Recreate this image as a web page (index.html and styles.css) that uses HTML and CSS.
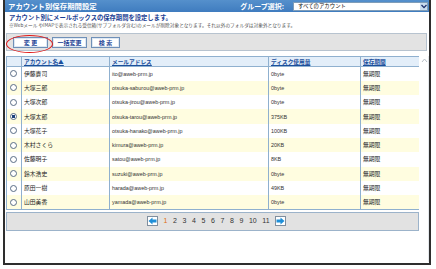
FILE: index.html
```html
<!DOCTYPE html>
<html lang="ja">
<head>
<meta charset="utf-8">
<link rel="stylesheet" href="styles.css">
</head>
<body>
<div class="window">
  <div class="titlebar">
    <span class="title">アカウント別保存期間設定</span>
    <div class="group">
      <span class="glabel">グループ選択:</span>
      <div class="select">
        <span class="seltext">すべてのアカウント</span>
        <span class="selarrow"><svg width="6" height="5" viewBox="0 0 6 5"><path d="M0.5 1 L3 3.6 L5.5 1" fill="none" stroke="#1b2f6b" stroke-width="1.3"/></svg></span>
      </div>
    </div>
  </div>
  <div class="content">
    <p class="desc">アカウント別にメールボックスの保存期間を設定します。</p>
    <p class="note">※Webメール やIMAPで表示される受信箱(サブフォルダ含む)のメールが削除対象となります。それ以外のフォルダは対象外となります。</p>
    <div class="toolbar">
      <button class="btn b1">変 更</button>
      <button class="btn b2">一括変更</button>
      <button class="btn b3">検 索</button>
      <span class="mark"></span>
    </div>
    <div class="listwrap">
      <div class="list">
        <table class="grid">
          <colgroup><col class="c0"><col class="c1"><col class="c2"><col class="c3"><col class="c4"></colgroup>
          <thead>
            <tr><th></th><th><a>アカウント名▲</a></th><th><a>メールアドレス</a></th><th><a>ディスク使用量</a></th><th><a>保存期間</a></th></tr>
          </thead>
          <tbody>
            <tr><td><span class="radio"></span></td><td>伊藤貴司</td><td class="mail">ito@aweb-prm.jp</td><td class="mail">0byte</td><td>無期限</td></tr>
            <tr class="alt"><td><span class="radio"></span></td><td>大塚三郎</td><td class="mail">otsuka-saburou@aweb-prm.jp</td><td class="mail">0byte</td><td>無期限</td></tr>
            <tr><td><span class="radio"></span></td><td>大塚次郎</td><td class="mail">otsuka-jirou@aweb-prm.jp</td><td class="mail">0byte</td><td>無期限</td></tr>
            <tr class="alt"><td><span class="radio on"></span></td><td>大塚太郎</td><td class="mail">otsuka-tarou@aweb-prm.jp</td><td class="mail">375KB</td><td>無期限</td></tr>
            <tr><td><span class="radio"></span></td><td>大塚花子</td><td class="mail">otsuka-hanako@aweb-prm.jp</td><td class="mail">100KB</td><td>無期限</td></tr>
            <tr class="alt"><td><span class="radio"></span></td><td>木村さくら</td><td class="mail">kimura@aweb-prm.jp</td><td class="mail">20KB</td><td>無期限</td></tr>
            <tr><td><span class="radio"></span></td><td>佐藤明子</td><td class="mail">satou@aweb-prm.jp</td><td class="mail">8KB</td><td>無期限</td></tr>
            <tr class="alt"><td><span class="radio"></span></td><td>鈴木浩史</td><td class="mail">suzuki@aweb-prm.jp</td><td class="mail">0byte</td><td>無期限</td></tr>
            <tr><td><span class="radio"></span></td><td>原田一樹</td><td class="mail">harada@aweb-prm.jp</td><td class="mail">49KB</td><td>無期限</td></tr>
            <tr class="alt"><td><span class="radio"></span></td><td>山田美香</td><td class="mail">yamada@aweb-prm.jp</td><td class="mail">0byte</td><td>無期限</td></tr>
          </tbody>
        </table>
        <div class="pager">
          <span class="pbtn"><svg width="9" height="8" viewBox="0 0 9 8"><path d="M0.5 4 L4.5 0.5 L4.5 2.5 L8.5 2.5 L8.5 5.5 L4.5 5.5 L4.5 7.5 Z" fill="#1f8fd8"/></svg></span>
          <span class="pg cur">1</span><span class="pg">2</span><span class="pg">3</span><span class="pg">4</span><span class="pg">5</span><span class="pg">6</span><span class="pg">7</span><span class="pg">8</span><span class="pg">9</span><span class="pg">10</span><span class="pg">11</span>
          <span class="pbtn"><svg width="9" height="8" viewBox="0 0 9 8"><path d="M8.5 4 L4.5 0.5 L4.5 2.5 L0.5 2.5 L0.5 5.5 L4.5 5.5 L4.5 7.5 Z" fill="#1f8fd8"/></svg></span>
        </div>
      </div>
      <div class="scroll">
        <svg width="7" height="5" viewBox="0 0 7 5"><path d="M1 4 L3.5 1 L6 4" fill="none" stroke="#b8c0c8" stroke-width="1"/></svg>
      </div>
    </div>
  </div>
</div>
</body>
</html>
```

FILE: styles.css
```css
* { box-sizing: border-box; }
body {
  margin: 0;
  background: #fff;
  font-family: "Liberation Sans", "Noto Sans CJK JP", sans-serif;
}
.window {
  margin-left: 3px;
  width: 428px;
  height: 265px;
  border: 2px solid #2e2e2e;
  border-top: 0;
  background: #fff;
}
.titlebar {
  height: 13px;
  background: linear-gradient(#5590cc, #3f7cbf);
  border-bottom: 1px solid #fff;
  display: flex;
  align-items: center;
  padding-left: 3px;
}
.title {
  color: #fff;
  font-family: "Noto Sans CJK JP", sans-serif;
  font-size: 7.4px;
  font-weight: bold;
  line-height: 12px;
}
.group {
  margin-left: auto;
  display: flex;
  align-items: center;
}
.glabel {
  color: #fff;
  font-family: "Noto Sans CJK JP", sans-serif;
  font-size: 7px;
  font-weight: bold;
  margin-right: 9px;
  line-height: 12px;
}
.select {
  width: 135px;
  height: 9px;
  margin-right: 1px;
  background: #fff;
  border: 1px solid #7f9db9;
  display: flex;
  align-items: center;
}
.seltext {
  font-family: "Noto Sans CJK JP", sans-serif;
  font-size: 5.4px;
  color: #111;
  padding-left: 4px;
  line-height: 7px;
}
.selarrow {
  margin-left: auto;
  width: 7px;
  height: 7px;
  background: #c9dcef;
  display: flex;
  align-items: center;
  justify-content: center;
}
.content {
  padding: 0 1px;
}
.desc {
  margin: 1px 0 0 0;
  padding-left: 3px;
  font-family: "Noto Sans CJK JP", sans-serif;
  font-size: 6.3px;
  font-weight: bold;
  color: #1c3f94;
  line-height: 8px;
}
.note {
  margin: 0;
  padding-left: 3px;
  font-family: "Noto Sans CJK JP", sans-serif;
  font-size: 4.7px;
  color: #555;
  line-height: 6px;
  white-space: nowrap;
}
.toolbar {
  position: relative;
  margin-top: 5px;
  width: 421px;
  height: 18px;
  background: #e3e3e3;
  border: 1px solid #b7c3cf;
  display: flex;
  align-items: center;
  padding-left: 6px;
  gap: 4px;
}
.btn {
  height: 11px;
  padding: 0;
  background: #fff;
  border: 1px solid #6f90b8;
  box-shadow: inset 0 0 0 1px #dfe8f2;
  color: #1c3f94;
  font-family: "Noto Sans CJK JP", sans-serif;
  font-size: 6px;
  font-weight: bold;
  line-height: 9px;
}
.b1 { width: 35px; }
.b2 { width: 35px; }
.b3 { width: 29px; }
.mark {
  position: absolute;
  left: -1px;
  top: 1px;
  width: 47px;
  height: 18px;
  border: 1.6px solid #e01818;
  border-radius: 50%;
}
.listwrap {
  margin-top: 5px;
  display: flex;
}
.list {
  width: 413px;
}
.grid {
  width: 413px;
  border-collapse: collapse;
  table-layout: fixed;
  border: 1px solid #8fb0cf;
}
.c0 { width: 15px; }
.c1 { width: 88px; }
.c2 { width: 159px; }
.c3 { width: 92px; }
.c4 { width: 59px; }
.grid th {
  height: 10px;
  padding: 0 0 0 2px;
  background: #e3eef9;
  border: 1px solid #8fb0cf;
  text-align: left;
  font-family: "Noto Sans CJK JP", sans-serif;
  font-size: 5.7px;
  font-weight: bold;
  line-height: 8px;
}
.grid th a {
  color: #1b4f9c;
  text-decoration: underline;
}
.grid td {
  height: 14.3px;
  padding: 0 0 0 2px;
  border-left: 1px solid #8fb0cf;
  border-right: 1px solid #8fb0cf;
  font-family: "Noto Sans CJK JP", sans-serif;
  font-size: 5.8px;
  color: #222;
  line-height: 8px;
  white-space: nowrap;
}
.grid td.mail {
  font-family: "Liberation Sans", sans-serif;
  font-size: 5.4px;
  color: #333;
}
.grid tr.alt td { background: #fffde0; }
.grid td:first-child { padding: 0 0 0 3px; }
.radio {
  display: block;
  width: 7px;
  height: 7px;
  border: 1px solid #5a6d86;
  border-radius: 50%;
  background: #fff;
}
.radio.on {
  background: radial-gradient(circle, #1b3f7a 0 1.6px, #fff 1.9px);
}
.pager {
  margin-top: 2px;
  height: 19px;
  background: #e2e2e2;
  border: 1px solid #9cb3ca;
  display: flex;
  align-items: center;
  justify-content: center;
  padding-left: 8px;
}
.pbtn {
  width: 11px;
  height: 10px;
  background: #fff;
  border: 1px solid #7f8e9e;
  display: flex;
  align-items: center;
  justify-content: center;
  margin: 0 3px;
}
.pg {
  font-family: "Liberation Sans", sans-serif;
  font-size: 7px;
  color: #333;
  margin: 0 2.8px;
  line-height: 8px;
}
.pg.cur { color: #e07010; }
.scroll {
  flex: 1;
  border-left: 2px solid #fff;
  border-right: 1px solid #e4e8ec;
  display: flex;
  justify-content: center;
  align-items: flex-start;
  padding-top: 2px;
  height: 206px;
}
```
